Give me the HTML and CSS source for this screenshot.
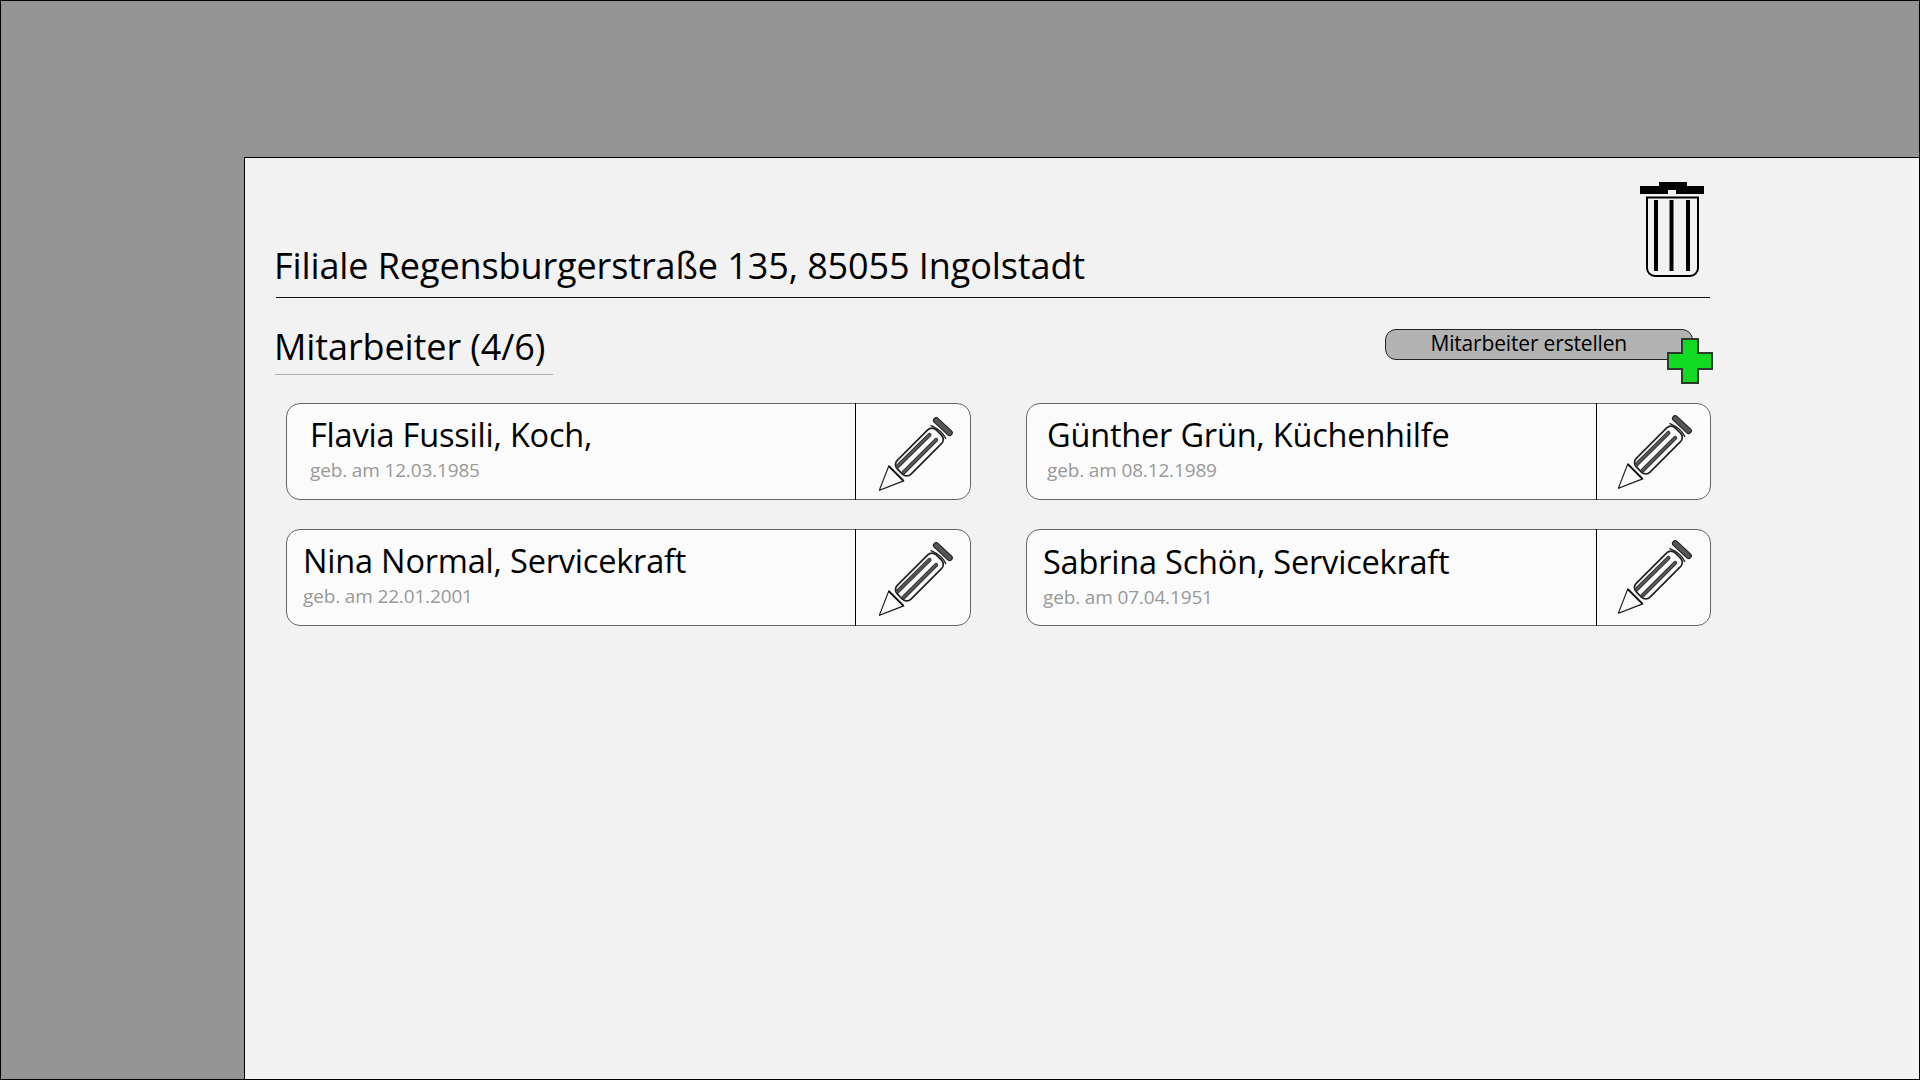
FILE: index.html
```html
<!DOCTYPE html>
<html lang="de">
<head>
<meta charset="utf-8">
<title>Filiale</title>
<link rel="stylesheet" href="styles.css">
</head>
<body>
<svg class="defs" width="0" height="0" aria-hidden="true">
  <symbol id="pencil" viewBox="0 0 220 220">
    <path d="M1 218 L29 146 L73 190 Z" fill="none" stroke="#222" stroke-width="3.5" stroke-linejoin="miter"/>
    <path d="M29 146 L73 190" stroke="#111" stroke-width="6"/>
    <path d="M153 25 Q188 40 199 65" stroke="#222" stroke-width="4" fill="#fbfbfb"/>
    <rect x="38" y="75" width="164" height="58" rx="18" transform="rotate(-45 120 104)" fill="#fbfbfb" stroke="#222" stroke-width="5"/>
    <path d="M55 147 L150 53" stroke="#222" stroke-width="12" stroke-linecap="round"/>
    <path d="M55 147 L150 53" stroke="#555" stroke-width="8" stroke-linecap="round"/>
    <path d="M73 165 L170 68" stroke="#222" stroke-width="12" stroke-linecap="round"/>
    <path d="M73 165 L170 68" stroke="#555" stroke-width="8" stroke-linecap="round"/>
    <path d="M170 10 L210 47" stroke="#222" stroke-width="19" stroke-linecap="round"/>
    <path d="M170 10 L210 47" stroke="#555" stroke-width="13" stroke-linecap="round"/>
  </symbol>
</svg>
<main class="screen">
  <section class="panel">
    <header class="head">
      <h1 class="title">Filiale Regensburgerstraße 135, 85055 Ingolstadt</h1>
      <svg class="trash" width="64" height="95" viewBox="0 0 64 95" aria-label="Löschen">
        <path d="M0 4H19V0H47V4H64V12H36V8H28V12H0Z" fill="#000"/>
        <path d="M7 15.500H58V86A8 8 0 0 1 50 94H15A8 8 0 0 1 7 86Z" fill="none" stroke="#000" stroke-width="2"/>
        <rect x="14" y="18" width="4" height="71"/>
        <rect x="29.500" y="18" width="4" height="71"/>
        <rect x="46" y="18" width="4" height="71"/>
      </svg>
    </header>
    <div class="section">
      <h2 class="subtitle">Mitarbeiter (4/6)</h2>
      <button class="create" type="button">Mitarbeiter erstellen
        <svg class="plus" width="46" height="46" viewBox="0 0 46 46" aria-hidden="true">
          <path d="M15 1H31V15H45V31H31V45H15V31H1V15H15Z" fill="#12d921" stroke="#2b3a2b" stroke-width="2"/>
        </svg>
      </button>
    </div>
    <div class="cards">
      <article class="card">
        <div class="info wide">
          <div class="name">Flavia Fussili, Koch,</div>
          <div class="born">geb. am 12.03.1985</div>
        </div>
        <div class="edit col-a top-a"><svg class="pen"><use href="#pencil"/></svg></div>
      </article>
      <article class="card">
        <div class="info mid">
          <div class="name">Günther Grün, Küchenhilfe</div>
          <div class="born">geb. am 08.12.1989</div>
        </div>
        <div class="edit col-b top-b"><svg class="pen"><use href="#pencil"/></svg></div>
      </article>
      <article class="card">
        <div class="info narrow">
          <div class="name">Nina Normal, Servicekraft</div>
          <div class="born">geb. am 22.01.2001</div>
        </div>
        <div class="edit col-a top-c"><svg class="pen"><use href="#pencil"/></svg></div>
      </article>
      <article class="card">
        <div class="info tight">
          <div class="name">Sabrina Schön, Servicekraft</div>
          <div class="born">geb. am 07.04.1951</div>
        </div>
        <div class="edit col-b top-d"><svg class="pen"><use href="#pencil"/></svg></div>
      </article>
    </div>
  </section>
</main>
</body>
</html>
```
FILE: styles.css
```css
* { box-sizing: border-box; }
html, body { margin: 0; padding: 0; }
body { font-family: "Open Sans", "Noto Sans", sans-serif; color: #000; }
.defs { display: block; height: 0; }
.screen {
  width: 1920px; height: 1080px; background: #949494;
  border: 1px solid #000; padding: 156px 0 0 243px; display: flex; overflow: hidden;
}
.panel { flex: 1; background: #f2f2f2; border-top: 1px solid #000; border-left: 1px solid #000; }
.head {
  margin-left: 31px; width: 1434px; height: 140px; padding: 24px 6px 20px 0;
  border-bottom: 1px solid #111; display: flex; justify-content: space-between; align-items: flex-end;
}
.title { margin: 0 0 -13px -2px; font-size: 36px; line-height: 49px; font-weight: 400; letter-spacing: -0.1px; white-space: nowrap; }
.trash { flex: none; display: block; }
.section {
  margin-left: 30px; width: 1435px; height: 105px; padding: 31px 17px 0 0;
  display: flex; justify-content: space-between; align-items: flex-start;
}
.subtitle {
  margin: 0; width: 278px; height: 46px; font-size: 36px; line-height: 35px; font-weight: 400;
  letter-spacing: -0.1px; border-bottom: 1px solid #aaa; white-space: nowrap; text-indent: -1px;
}
.create {
  position: relative; width: 308px; height: 31px; padding: 0 65px 4px 0; text-align: right;
  font: 400 21px/26px "Open Sans", sans-serif; letter-spacing: -0.17px; color: #000;
  background: #b3b3b3; border: 1px solid #222; border-radius: 11px;
}
.plus { position: absolute; right: -21px; top: 8px; display: block; }
.cards {
  margin-left: 41px; width: 1425px; display: grid; grid-template-columns: 685px 685px;
  column-gap: 55px; row-gap: 29px;
}
.card {
  height: 97px; display: flex; background: #fbfbfb; border: 1px solid #666; border-radius: 14px;
}
.info { flex: 1; padding-top: 11px; }
.wide { padding-left: 23px; }
.mid { padding-left: 20px; }
.narrow { padding-left: 16px; }
.tight { padding-left: 16px; padding-top: 12px; }
.name { font-size: 32.500px; line-height: 40px; letter-spacing: -0.2px; white-space: nowrap; }
.born { font-size: 19px; line-height: 26px; margin-top: 2px; color: #999; letter-spacing: -0.15px; white-space: nowrap; }
.edit { flex: none; border-left: 1px solid #000; margin: -1px 0; }
.col-a { width: 115px; padding-left: 23px; }
.col-b { width: 114px; padding-left: 21px; }
.top-a { padding-top: 14px; }
.top-b { padding-top: 12px; }
.top-c { padding-top: 13px; }
.top-d { padding-top: 11px; }
.pen { display: block; width: 74px; height: 74px; }
```
